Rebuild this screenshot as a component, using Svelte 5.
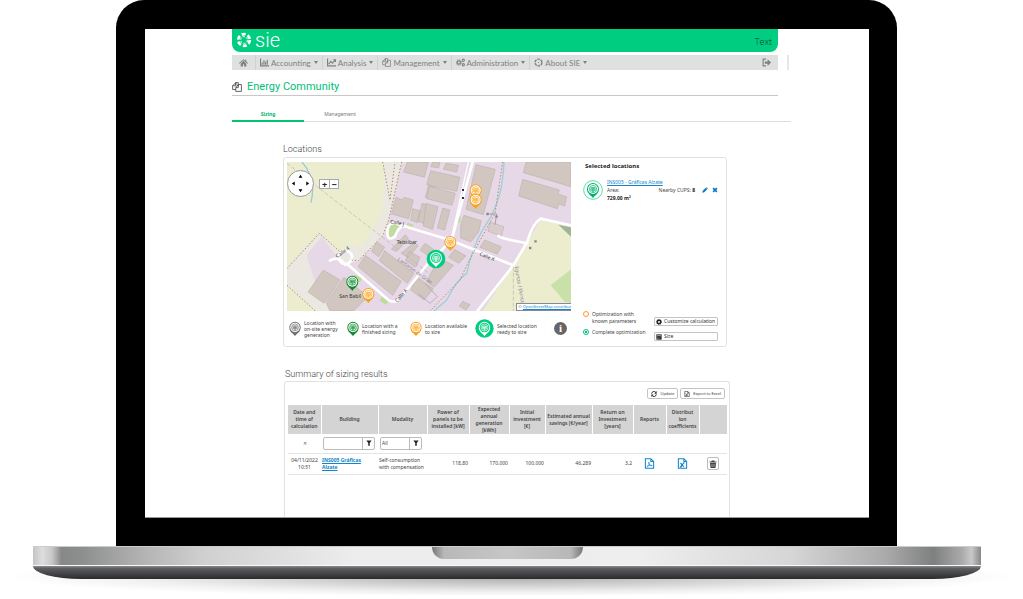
<script>
    const menu = [
        { label: 'Accounting', icon: 'bars' },
        { label: 'Analysis', icon: 'line' },
        { label: 'Management', icon: 'copy' },
        { label: 'Administration', icon: 'cogs' },
        { label: 'About SIE', icon: 'ring' }
    ];

    const legend = [
        { text: 'Location with\non-site energy\ngeneration', color: '#6f6f6f', w: 58 },
        { text: 'Location with a\nfinished sizing', color: '#0c8a2c', w: 63 },
        { text: 'Location available\nto size', color: '#f9a11b', w: 65 },
        { text: 'Selected location\nready to size', color: '#00cd7f', w: 79, selected: true }
    ];

    const columns = [
        { label: 'Date and\ntime of\ncalculation', w: 33 },
        { label: 'Building', w: 57 },
        { label: 'Modality', w: 49 },
        { label: 'Power of\npanels to be\ninstalled [kW]', w: 42 },
        { label: 'Expected\nannual\ngeneration\n[kWh]', w: 40 },
        { label: 'Initial\ninvestment\n[€]', w: 36 },
        { label: 'Estimated annual\nsavings [€/year]', w: 47 },
        { label: 'Return on\nInvestment\n[years]', w: 41 },
        { label: 'Reports', w: 33 },
        { label: 'Distribut\nion\ncoefficients', w: 33 },
        { label: '', w: 28 }
    ];

    // Map markers, in map units
    const markers = [
        { x: 587, y: 151, color: '#f9a11b' },
        { x: 587, y: 179, color: '#f9a11b' },
        { x: 511, y: 306, color: '#f9a11b' },
        { x: 217, y: 425, color: '#0c8a2c' },
        { x: 265, y: 462, color: '#f9a11b' }
    ];

    let mode = 'complete';
    let buildingFilter = '';
    let modality = 'All';
</script>

{#snippet pinShape(color, back)}
    <path d="M0 28C-4 19-18 15-18 0A18 18 0 0 1 18 0C18 15 4 19 0 28Z" fill={color} />
    <circle r="15" fill={back} />
    <circle r="11" fill="none" stroke={color} stroke-width="2" />
    <path d="M-6-5H6L7 4H-7ZM-2-5V4M2-5V4M-6 0H6M0 4V8M-3 8H3" fill="none" stroke={color} stroke-width="2" />
{/snippet}

{#snippet icon(name)}
    <svg class="icon" viewBox="0 0 16 16" aria-hidden="true">
        {#if name === 'home'}
            <path d="M8 2 0 9l1 1 7-6 7 6 1-1-3-3V3h-2v2ZM8 5 3 10v5h4v-4h2v4h4v-5Z" fill="currentColor" />
        {:else if name === 'bars'}
            <path d="M1 1V14H16M4 12V8M7 12V4M10 12V6M13 12V3" fill="none" stroke="currentColor" stroke-width="2" />
        {:else if name === 'line'}
            <path d="M1 1V14H16M3 11 7 6l3 3 4-5M11 3h4v4" fill="none" stroke="currentColor" stroke-width="2" />
        {:else if name === 'copy'}
            <path d="M6 5V1h4v6h0M6 1 1 6v6h5M1 6h5V1M10 4h5v11H6V9l4-5v5H6" fill="none" stroke="currentColor" stroke-width="1.3" />
        {:else if name === 'cogs'}
            <circle cx="5" cy="8" r="3" fill="none" stroke="currentColor" stroke-width="2.4" />
            <circle cx="5" cy="8" r="5" fill="none" stroke="currentColor" stroke-width="1.6" stroke-dasharray="2 1.9" />
            <circle cx="13" cy="4" r="2" fill="none" stroke="currentColor" stroke-width="1.8" />
            <circle cx="13" cy="12" r="2" fill="none" stroke="currentColor" stroke-width="1.8" />
        {:else if name === 'ring'}
            <circle cx="8" cy="8" r="6" fill="none" stroke="currentColor" stroke-width="2.6" stroke-dasharray="4.8 1.5" />
            <circle cx="8" cy="8" r="1" fill="currentColor" />
        {:else if name === 'exit'}
            <path d="M7 2H2v12h5" fill="none" stroke="currentColor" stroke-width="2" />
            <path d="M5 6h5V2l6 6-6 6v-4H5Z" fill="currentColor" />
        {:else if name === 'pencil'}
            <path d="m1 15 1-5 8-8 4 4-8 8ZM11 1l1-1 4 4-1 1Z" fill="currentColor" />
        {:else if name === 'cross'}
            <path d="m3 3 10 10M13 3 3 13" fill="none" stroke="currentColor" stroke-width="4.5" />
        {:else if name === 'gear'}
            <circle cx="8" cy="8" r="4.6" fill="none" stroke="currentColor" stroke-width="4" />
            <circle cx="8" cy="8" r="7" fill="none" stroke="currentColor" stroke-width="2" stroke-dasharray="3 2.5" />
        {:else if name === 'calc'}
            <path d="M1 1h14v14H1Z" fill="currentColor" />
            <path d="M3 4h10M3 8h2m2 0h2m2 0h2M3 12h2m2 0h2" stroke="#fff" stroke-width="1.4" />
        {:else if name === 'refresh'}
            <path d="M2 7a6 6 0 0 1 11-3M14 9a6 6 0 0 1-11 3" fill="none" stroke="currentColor" stroke-width="2.6" />
            <path d="M15 0v7H9ZM1 16V9h6Z" fill="currentColor" />
        {:else if name === 'funnel'}
            <path d="M1 1h14l-5 7v7H6V8Z" fill="currentColor" />
        {:else if name === 'trash'}
            <path d="M5 1h6v2h4v2H1V3h4ZM2 6h12l-1 10H3Z" fill="currentColor" />
            <path d="M6 8v6M10 8v6" stroke="#fff" />
        {:else if name === 'excel' || name === 'pdf'}
            <path d="M2 1h8l4 4v10H2ZM10 1v4h4" fill="none" stroke="currentColor" stroke-width="1.5" />
            {#if name === 'excel'}
                <path d="m5 7 5 6M10 7l-5 6M4 13h3M9 7h2" fill="none" stroke="currentColor" stroke-width="1.6" />
            {:else}
                <path d="M4 13c3-2 4-5 3-7 0 4 2 5 5 5-3-1-6 0-8 2Z" fill="none" stroke="currentColor" />
            {/if}
        {/if}
    </svg>
{/snippet}

<div class="stage">
    <div class="lid">
        <div class="screen">
            <div class="app">
                <header class="brand">
                    <svg class="logo" viewBox="0 0 16 16" aria-hidden="true">
                        <circle cx="8" cy="8" r="5.8" fill="none" stroke="#fff" stroke-width="2.8" stroke-dasharray="4 2.07" />
                        <circle cx="8" cy="8" r="3.4" fill="none" stroke="#fff" stroke-dasharray="2.2 1.36" />
                    </svg>
                    <span class="name">sie</span>
                    <span class="user">Text</span>
                </header>

                <nav class="menu">
                    <button class="home" aria-label="Home">{@render icon('home')}</button>
                    {#each menu as m (m.label)}
                        <button>{@render icon(m.icon)}{m.label}<i class="caret"></i></button>
                    {/each}
                    <button class="exit" aria-label="Log out">{@render icon('exit')}</button>
                </nav>

                <h1>{@render icon('copy')}Energy Community</h1>

                <div class="tabs">
                    <button class="active">Sizing</button>
                    <button>Management</button>
                </div>

                <main>
                    <h2>Locations</h2>
                    <section class="card locations">
                        <div class="left">
                            <div class="map">
                                <svg viewBox="21 66 852 447" preserveAspectRatio="xMidYMid slice" role="img" aria-label="Map">
                                    <rect x="21" y="66" width="852" height="447" fill="#e6d8e6" />
                                    <path d="M21 66H365L326 240 310 290 235 362 190 375 125 290 80 345 100 410 158 513H21Z" fill="#ebe7e1" />
                                    <path d="M21 66H308Q318 160 303 220 285 270 245 318 210 315 178 334L118 275 21 378Z" fill="#ecedcf" />
                                    <path d="M21 436 108 513H21Z" fill="#ecedcf" />
                                    <path d="M782 240 873 262V513H608L700 376 742 305Z" fill="#ecedcf" />
                                    <path d="M812 436 873 388V488L855 486Z" fill="#c9e0a8" />
                                    <path d="M835 254 873 262V290Z" fill="#9fb595" />
                                    <path d="M325 248 362 258 334 293 322 288ZM383 248l18 6-4 6-18-6ZM305 468l22 14-10 12-18-12ZM402 424l10 4-8 18-10-8ZM222 404l26 10-8 12-20-10ZM532 236l10-8 0 16-8 6Z" fill="#bfdc9e" />
                                    <path d="M66 66Q110 115 93 188" fill="none" stroke="#9bc8de" stroke-width="4" />
                                    <g fill="#d1c6c0" stroke="#b9aaa4" stroke-width="1.5">
                                        <path d="M382 66H445L433 112 371 96ZM348 172l18 8 6-8 28 8-14 56-52-14ZM398 206l22 6-8 36-20-8ZM426 190l24 6-10 58-26-10ZM446 136l20 6-8 36-22-6Z" />
                                        <path d="M452 92 540 112 530 154 440 134ZM448 138 526 160 516 196 440 176ZM458 66H480L476 84 452 80ZM498 70 536 76 530 96 490 88Z" />
                                        <path d="M438 190 474 200 458 268 430 258ZM488 204 510 210 494 270 472 264Z" />
                                        <path d="M588 74 646 88 610 224 558 208ZM552 226 604 242 596 276 572 306 542 294 542 256ZM614 300 664 320 652 342 600 322Z" />
                                        <path d="M738 66H873V140L730 98ZM728 118 838 150 834 162 860 170 854 198 836 192 832 206 716 168Z" />
                                        <path d="M256 346 364 424 338 466 234 380ZM314 332 402 400 382 430 298 362ZM290 306 314 322 296 350 274 334ZM376 284 386 296 350 334 334 328ZM404 306 414 318 384 352 364 340ZM388 334 420 352 408 382 376 362Z" />
                                        <path d="M130 390 180 420 132 490 84 456ZM192 412 264 470 220 513H150L138 488Z" />
                                        <path d="M478 354 520 376 462 442 440 424ZM524 328 558 348 536 370 506 352ZM435 310l28 20-18 18-25-18ZM548 484l22 10-12 16-20-12ZM410 410 460 446 432 480 392 450Z" />
                                        <path d="M630 246 672 260 664 288 624 274Z" fill="#d8cccd" />
                                    </g>
                                    <path d="M435 430 472 470 450 490 416 462" fill="none" stroke="#a89da2" stroke-width="2" />
                                    <path d="M672 66Q668 180 620 250 580 310 560 400 530 420 500 480L462 513" fill="none" stroke="#9fcfdd" stroke-width="4" />
                                    <g class="roads">
                                        <path d="M578 66 515 300 440 375 356 480Q340 490 325 480L205 375M360 255 510 300 700 376 742 305Q758 250 782 236L873 256M700 376 592 513M655 288Q664 296 742 310M360 255Q325 238 322 276 322 306 345 290 356 256 376 258M196 375Q176 345 150 362" />
                                        <circle cx="196" cy="352" r="20" />
                                    </g>
                                    <path d="M565 66 516 288" fill="none" stroke="#fff" stroke-width="4" />
                                    <path d="M365 66 326 240 308 288 235 362 215 360M308 66 330 180 345 66M21 386 118 280 180 335M21 436 106 513M668 66 645 220 568 360 540 420 450 513" fill="none" stroke="#b18957" stroke-width="3" stroke-dasharray="4 6" />
                                    <path d="M21 70 450 402M700 380V513" fill="none" stroke="#bbb2b2" stroke-width="2" stroke-dasharray="12 6" />
                                    <path d="M622 222H650L645 254" fill="none" stroke="#8e8588" stroke-width="2" />
                                    <g class="labels">
                                        <text x="330" y="250" transform="rotate(10 330 250)">Calle J</text>
                                        <text x="172" y="354" transform="rotate(-36 172 354)">Calle 4</text>
                                        <text x="350" y="311">Teitxibar</text>
                                        <text x="178" y="474">San Babil</text>
                                        <text x="352" y="488" transform="rotate(-48 352 488)">Calle A</text>
                                        <text x="598" y="346" transform="rotate(22 598 346)">Calle X</text>
                                        <text x="352" y="360" transform="rotate(36 352 360)" fill="#8a7e88">Lantarón de Gran</text>
                                        <text x="704" y="380" transform="rotate(80 704 380)" fill="#8a7e88">Egurtza / Ekintza</text>
                                    </g>
                                    <path d="M546 150h6M546 174h6" stroke="#333" stroke-width="6" />
                                    <path d="M619 222h7M646 230h7M763 304h7M747 324h7" stroke="#8e8588" stroke-width="7" />
                                    {#each markers as m}
                                        <g transform="translate({m.x} {m.y})">{@render pinShape(m.color, '#fff')}</g>
                                    {/each}
                                    <g transform="translate(468 357)">
                                        <circle r="28" fill="#00cd7f" />
                                        <g transform="translate(0 -3)">{@render pinShape('#fff', '#00cd7f')}</g>
                                    </g>
                                </svg>
                                <button class="pan" aria-label="Pan map">
                                    <svg viewBox="0 0 26 26" aria-hidden="true">
                                        <path d="m13 4 2 3h-4ZM13 22l2-3h-4ZM4 13l3-2v4ZM22 13l-3-2v4Z" />
                                    </svg>
                                </button>
                                <div class="zoom">
                                    <button aria-label="Zoom in">+</button>
                                    <button aria-label="Zoom out">−</button>
                                </div>
                                <div class="credit">© <a href="#osm">OpenStreetMap contribut</a></div>
                            </div>

                            <div class="legend">
                                {#each legend as l}
                                    <div class="entry" style:flex-basis="{l.w}px">
                                        {#if l.selected}
                                            <svg class="spot" viewBox="-30 -30 60 60" aria-hidden="true">
                                                <circle r="29" fill={l.color} />
                                                <g transform="translate(0 -3)">{@render pinShape('#fff', l.color)}</g>
                                            </svg>
                                        {:else}
                                            <svg class="pin" viewBox="-19 -19 38 48" aria-hidden="true">{@render pinShape(l.color, '#fff')}</svg>
                                        {/if}
                                        <span>{l.text}</span>
                                    </div>
                                {/each}
                                <button class="info" aria-label="Information">i</button>
                            </div>
                        </div>

                        <aside>
                            <h3>Selected locations</h3>
                            <div class="site">
                                <svg class="badge" viewBox="-30 -30 60 60" aria-hidden="true">
                                    <circle r="28" fill="#fff" stroke="#00cd7f" stroke-width="2" />
                                    <g transform="translate(0 -3)">{@render pinShape('#00b26e', '#fff')}</g>
                                </svg>
                                <div class="facts">
                                    <a href="#ins005">INS005 - Gráficas Alzate</a>
                                    <div class="row">
                                        <span>Area:</span>
                                        <span class="cups">Nearby CUPS: <b>8</b></span>
                                        <button aria-label="Edit">{@render icon('pencil')}</button>
                                        <button aria-label="Remove">{@render icon('cross')}</button>
                                    </div>
                                    <b>729,00 m²</b>
                                </div>
                            </div>
                            <div class="options">
                                <div class="modes">
                                    <label class="amber"><input type="radio" name="mode" value="known" bind:group={mode} /><span>Optimization with<br />known parameters</span></label>
                                    <label><input type="radio" name="mode" value="complete" bind:group={mode} /><span>Complete optimization</span></label>
                                </div>
                                <div class="actions">
                                    <button class="btn">{@render icon('gear')}Customize calculation</button>
                                    <button class="btn">{@render icon('calc')}Size</button>
                                </div>
                            </div>
                        </aside>
                    </section>

                    <h2 class="second">Summary of sizing results</h2>
                    <section class="card results">
                        <div class="toolbar">
                            <button class="btn">{@render icon('refresh')}Update</button>
                            <button class="btn">{@render icon('excel')}Export to Excel</button>
                        </div>
                        <table>
                            <thead>
                                <tr>
                                    {#each columns as c}
                                        <th style:width="{c.w}px">{c.label}</th>
                                    {/each}
                                </tr>
                            </thead>
                            <tbody>
                                <tr class="filters">
                                    <td class="mid"><button class="clear" aria-label="Clear filters">✕</button></td>
                                    <td>
                                        <div class="filter">
                                            <input type="text" aria-label="Filter by building" bind:value={buildingFilter} />
                                            <button aria-label="Apply building filter">{@render icon('funnel')}</button>
                                        </div>
                                    </td>
                                    <td>
                                        <div class="filter short">
                                            <select aria-label="Filter by modality" bind:value={modality}>
                                                <option>All</option>
                                            </select>
                                            <button aria-label="Apply modality filter">{@render icon('funnel')}</button>
                                        </div>
                                    </td>
                                    <td colspan="8"></td>
                                </tr>
                                <tr>
                                    <td class="mid">04/11/2022 10:51</td>
                                    <td><a href="#ins005"><b>INS005 Gráficas<br />Alzate</b></a></td>
                                    <td>Self-consumption<br />with compensation</td>
                                    <td class="num">118,80</td>
                                    <td class="num">170.000</td>
                                    <td class="num">100.000</td>
                                    <td class="num">46.289</td>
                                    <td class="num">3,2</td>
                                    <td class="mid"><a class="file" href="#report" aria-label="PDF report">{@render icon('pdf')}</a></td>
                                    <td class="mid"><a class="file" href="#coefficients" aria-label="Excel file">{@render icon('excel')}</a></td>
                                    <td class="mid"><button class="trash" aria-label="Delete">{@render icon('trash')}</button></td>
                                </tr>
                            </tbody>
                        </table>
                    </section>
                </main>
            </div>
        </div>
    </div>

    <div class="base"><div class="notch"></div></div>
    <div class="foot"></div>
    <div class="shadow"></div>
</div>

<style>
    :global(body) { margin: 0; background: #fff; }
    * { box-sizing: border-box; }
    button, input, select { margin: 0; padding: 0; border: 0; background: none; color: inherit; font: inherit; }
    button { cursor: pointer; }
    svg { display: block; }
    a { color: #1186c8; }
    .icon { width: 8px; height: 8px; flex-shrink: 0; }

    .stage { overflow: hidden; font-family: "Noto Sans", "Open Sans", sans-serif; color: #444; }

    /* laptop */
    .lid { margin: 0 126px 0 116px; padding: 29px 28px 28px 29px; background: #000; border-radius: 28px 28px 0 0; }
    .screen { display: flex; min-height: 489px; background: #fff; border-bottom: 1px solid #999; }
    .base {
        position: relative; z-index: 1; height: 20px; margin: 0 42px 0 33px; border-top: 1px solid #ccc; border-bottom: 1px solid #f8f8f8;
        background: linear-gradient(90deg, #c4c4c4 0, #dedede 1%, #c8c8c8 2%, #888 3%, #8c8e8d 5%, #b5b5b5 12%, #d0d0d0 18%, #ededed 34%, #eee 64%, #d6d6d6 80%, #aaa 90%, #7e807f 95%, #aaa 98%, #c8c8c8 99%, #888 100%);
    }
    .notch { width: 151px; height: 12px; margin: 0 auto; border-radius: 0 0 12px 12px; background: linear-gradient(90deg, #777, #b8b8b8 8%, #c6c6c6 50%, #b8b8b8 92%, #777); }
    .foot { position: relative; z-index: 1; height: 13px; margin: 0 42px 0 33px; border-radius: 0 0 48px 48px / 0 0 13px 13px; background: linear-gradient(#8a8a8c, #5c5d60 20%, #2a2a2b); }
    .shadow { height: 40px; margin: -22px 8px -2px; background: radial-gradient(closest-side, #aaa, #d4d4d4 45%, #f0f0f0 75%, #fff); }

    /* page */
    .app { flex: 1; min-width: 0; display: flex; flex-direction: column; padding: 0 91px 0 87px; }
    .brand { display: flex; align-items: center; height: 23px; padding: 0 6px 1px 4px; background: #00cd7f; border-radius: 0 0 8px 8px; color: #fff; }
    .logo { width: 16px; height: 16px; }
    .name { margin-left: 3px; font-family: Roboto, sans-serif; font-weight: 300; font-size: 20px; line-height: 20px; }
    .user { margin-left: auto; padding-top: 3px; color: #04412a; font-family: "Open Sans", sans-serif; font-weight: 300; font-size: 9px; }

    .menu { position: relative; display: flex; height: 15px; margin-top: 3px; background: #dfe0e0; color: #808080; font-family: Lato, "Noto Sans", sans-serif; font-size: 8px; line-height: 14px; }
    .menu::after { content: ''; position: absolute; right: -11px; top: 0; width: 2px; height: 100%; background: #e6e6e6; }
    .menu button { display: flex; align-items: center; gap: 2px; padding: 0 4px; border-right: 1px solid #cfd0d0; white-space: nowrap; }
    .menu button.home { width: 24px; justify-content: center; }
    .menu button.exit, .menu button:nth-last-child(2) { border-right: 0; }
    .menu .exit { margin-left: auto; padding-right: 7px; }
    .menu .icon { width: 9px; height: 9px; }
    .caret { margin-left: 1px; border: 2px solid transparent; border-top: 3px solid #808080; border-bottom: 0; }

    h1, h2, h3 { margin: 0; font-weight: 400; }
    h1 { display: flex; align-items: center; gap: 5px; height: 26px; padding-top: 9px; padding-bottom: 1px; border-bottom: 1px solid #c8c8c8; color: #00c078; font-family: Roboto, sans-serif; font-size: 11px; line-height: 14px; }
    h1 .icon { width: 10px; height: 10px; color: #444; }

    .tabs { display: flex; margin: 10px -13px 0 0; border-bottom: 1px solid #ddd; font-size: 5px; line-height: 14px; color: #777; }
    .tabs button { width: 72px; height: 16px; padding-top: 1px; border-bottom: 2px solid transparent; margin-bottom: -1px; }
    .tabs button.active { color: #00b86c; font-weight: 700; border-bottom-color: #00c56f; }

    main { flex: 1; display: flex; flex-direction: column; padding: 21px 48px 0 51px; }
    h2 { color: #444; font-family: Roboto, sans-serif; font-weight: 300; font-size: 9px; line-height: 12px; }
    h2.second { margin: 21px 0 1px 2px; }
    .card { border: 1px solid #e2e2e2; border-radius: 3px; }

    .locations { display: flex; margin: 2px 3px 0 0; padding: 4px 3px 0; }
    .left { flex: 1; min-width: 0; }
    .map { position: relative; height: 149px; overflow: hidden; }
    .map > svg { width: 100%; height: 100%; }
    .roads { fill: none; stroke: #fff; stroke-width: 8; stroke-linejoin: round; stroke-linecap: round; }
    .labels { font-size: 15px; fill: #333; }
    .pan { position: absolute; left: 0; top: 8px; width: 27px; height: 27px; border: 1px solid #999; border-radius: 50%; background: #fff; }
    .pan svg { width: 25px; height: 25px; }
    .zoom { position: absolute; left: 32px; top: 17px; display: flex; border: 1px solid #aaa; background: #fff; }
    .zoom button { width: 9px; height: 8px; font-weight: 700; font-size: 9px; line-height: 7px; color: #222; }
    .zoom button + button { border-left: 1px solid #aaa; }
    .credit { position: absolute; right: 0; bottom: 0; white-space: nowrap; background: #fff; border: 1px solid #889; border-right: 0; padding-left: 1px; font-size: 4px; line-height: 6px; }

    .legend { display: flex; align-items: center; height: 35px; font-size: 5px; line-height: 6px; }
    .entry { display: flex; align-items: center; gap: 3px; padding-left: 2px; white-space: pre; }
    .pin { width: 12px; height: 16px; flex-shrink: 0; }
    .spot { width: 19px; height: 19px; flex-shrink: 0; }
    .info { width: 13px; height: 13px; margin-left: auto; margin-right: 4px; border-radius: 50%; background: #666; color: #fff; font: 700 11px/13px "Liberation Serif", serif; }

    aside { flex: 0 0 152px; display: flex; flex-direction: column; padding: 0 5px 5px 12px; font-size: 5px; line-height: 7px; }
    h3 { padding-left: 2px; font-weight: 700; font-size: 6px; line-height: 9px; color: #222; }
    .site { display: flex; align-items: center; gap: 4px; margin-top: 7px; }
    .badge { width: 20px; height: 20px; flex-shrink: 0; }
    .facts { flex: 1; line-height: 8px; }
    .facts > a, .facts > b { display: block; }
    .facts b { color: #222; }
    .row { display: flex; align-items: center; }
    .cups { margin-left: auto; }
    .row button { margin-left: 4px; color: #0d78c2; }
    .row button:first-of-type { margin-left: 7px; }
    .row .icon { width: 6px; height: 6px; }
    .options { display: flex; justify-content: space-between; align-items: flex-end; margin-top: auto; }
    .modes { padding-bottom: 5px; white-space: nowrap; }
    .modes label { display: flex; gap: 3px; }
    .modes label + label { margin-top: 4px; }
    input[type="radio"] { appearance: none; flex: none; width: 6px; height: 6px; border: 1px solid #00c078; border-radius: 50%; }
    input[type="radio"]:checked { background: radial-gradient(#00c078 45%, #fff 55%); }
    .amber input[type="radio"] { border-color: #f9a11b; }
    .actions { display: flex; flex-direction: column; gap: 6px; width: 64px; }
    .btn { display: flex; align-items: center; gap: 2px; height: 9px; padding: 0 2px; border: 1px solid #c4c4c4; border-radius: 1px; background: #fff; color: #333; white-space: nowrap; line-height: 7px; }
    .btn .icon { width: 6px; height: 6px; color: #222; }
    .actions .btn { padding: 0 1px; }

    .results { flex: 1; margin-left: 1px; padding: 6px 2px 0 3px; border-bottom: 0; border-radius: 3px 3px 0 0; font-size: 5px; line-height: 7px; }
    .toolbar { display: flex; justify-content: flex-end; gap: 2px; padding-right: 2px; font-size: 4px; }
    .toolbar .btn { height: 11px; gap: 3px; padding: 0 3px; border-radius: 2px; }
    table { width: 100%; margin-top: 6px; table-layout: fixed; border-collapse: collapse; }
    th { height: 29px; padding: 0; border-right: 1px solid #fff; background: #d4d4d4; color: #444; font-weight: 600; white-space: pre; }
    td { height: 21px; padding: 0 1px; border-bottom: 1px solid #e4e4e4; }
    .filters td { height: 19px; }
    .mid { text-align: center; }
    .num { text-align: right; }
    .filter { display: flex; width: 52px; height: 13px; margin-left: 1px; border: 1px solid #bbb; border-radius: 2px; }
    .filter.short { width: 42px; }
    .filter input, .filter select { flex: 1; min-width: 0; appearance: none; padding-left: 1px; }
    .filter button { display: grid; place-items: center; width: 12px; border-left: 1px solid #bbb; color: #222; }
    .filter .icon { width: 6px; height: 6px; }
    .clear { color: #666; }
    .file { display: inline-block; vertical-align: middle; }
    .file .icon { width: 11px; height: 11px; }
    .trash { display: inline-grid; place-items: center; width: 12px; height: 13px; border: 1px solid #bbb; border-radius: 2px; vertical-align: middle; }
</style>
